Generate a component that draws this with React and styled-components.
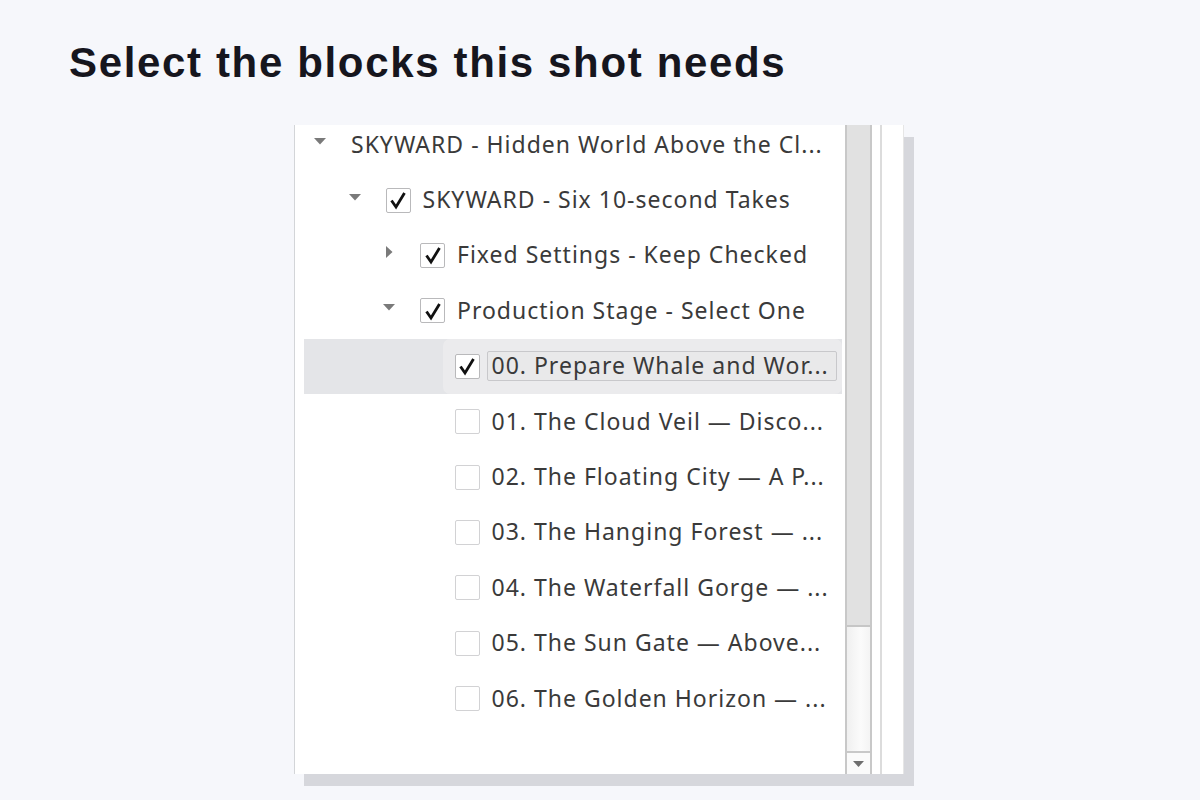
import React from 'react';
import styled, { createGlobalStyle } from 'styled-components';

const GlobalStyle = createGlobalStyle`
    html, body {
        margin: 0;
        padding: 0;
        background: #f6f7fb;
    }
    body {
        font-family: "Liberation Sans", Arial, sans-serif;
    }
`;

const Page = styled.div`
    width: 1200px;
    height: 800px;
    overflow: hidden;
    display: flex;
    flex-direction: column;
    box-sizing: border-box;
    padding: 40px 0 0 69px;
`;

const Heading = styled.h1`
    margin: 0;
    font-family: "Liberation Sans", Arial, sans-serif;
    font-size: 42px;
    line-height: 46px;
    font-weight: 700;
    letter-spacing: 1.65px;
    color: #16161e;
`;

const Shot = styled.div`
    align-self: flex-start;
    margin: 39px 0 0 225px;
    width: 610px;
    height: 649px;
    display: flex;
    background: #ffffff;
    border-left: 1px solid #d3d5d8;
    box-sizing: border-box;
    box-shadow: 10px 12px 0 #d6d7dc;
    overflow: hidden;
`;

const TreeArea = styled.div`
    flex: 1;
    padding: 0 3px 0 9px;
`;

const TreeList = styled.ul`
    list-style: none;
    margin: -8px 0 0;
    padding: 0;
    font-family: "Noto Sans", "Open Sans", sans-serif;
    font-size: 23px;
    letter-spacing: 1px;
    color: #3a3a3a;
`;

const Row = styled.li`
    display: flex;
    align-items: center;
    height: 55.4px;
    background: ${(p) => (p.selected ? '#e4e5e8' : 'transparent')};
`;

const Indent = styled.div`
    flex: none;
    width: ${(p) => p.level * 34.5}px;
`;

const Toggle = styled.div`
    flex: none;
    width: 32px;
    height: 100%;
    display: flex;
    align-items: center;
    justify-content: center;
    padding-bottom: 6px;
    box-sizing: border-box;
`;

const Item = styled.div`
    flex: 1;
    height: 100%;
    display: flex;
    align-items: center;
    margin-left: 3px;
    padding: 0 5px 0 12px;
    border-radius: 7px;
    background: ${(p) => (p.selected ? '#ebebed' : '#ffffff')};
`;

const Box = styled.span`
    flex: none;
    width: 25px;
    height: 25px;
    box-sizing: border-box;
    border: 1px solid ${(p) => (p.checked ? '#b9b9bb' : '#d2d2d4')};
    border-radius: 2px;
    background: #ffffff;
    display: flex;
    align-items: center;
    justify-content: center;
    margin-right: 7px;
`;

const Label = styled.span`
    flex: 1;
    white-space: nowrap;
    padding: 0 4px 1px;
    line-height: 27px;
    border: 1px solid ${(p) => (p.selected ? '#c8c8cb' : 'transparent')};
    border-radius: 2px;
    background: ${(p) => (p.selected ? '#e9e9ea' : 'transparent')};
    margin-left: ${(p) => (p.bare ? '-5px' : '0')};
`;

const Scrollbar = styled.div`
    flex: none;
    width: 27px;
    display: flex;
    flex-direction: column;
    border-left: 2px solid #c8c8c8;
    border-right: 2px solid #c8c8c8;
    box-sizing: border-box;
`;

const Thumb = styled.div`
    flex: none;
    height: 502px;
    background: #e1e1e1;
    border-bottom: 2px solid #c6c6c6;
    box-sizing: border-box;
`;

const Track = styled.div`
    flex: 1;
    background: linear-gradient(90deg, #f0f0f0, #fbfbfb 60%, #f4f4f4);
`;

const ArrowButton = styled.div`
    flex: none;
    height: 21px;
    border-top: 2px solid #c8c8c8;
    background: #fafafa;
    display: flex;
    align-items: center;
    justify-content: center;
`;

const Gutter = styled.div`
    flex: none;
    width: 8px;
`;

const Divider = styled.div`
    flex: none;
    width: 21px;
    border-left: 2px solid #dcdcdc;
    border-right: 1px solid #e6e6e6;
`;

const Caret = ({ open }) =>
    open ? (
        <svg width="12" height="7" viewBox="0 0 12 7">
            <path d="M0 0 H12 L6 6.5 Z" fill="#7a7a7a" />
        </svg>
    ) : (
        <svg width="7" height="12" viewBox="0 0 7 12">
            <path d="M0 0 V12 L6.5 6 Z" fill="#7a7a7a" />
        </svg>
    );

const Check = () => (
    <svg width="20" height="20" viewBox="0 0 20 20">
        <path
            d="M3.5 10.5 L8 17 L16.5 3"
            fill="none"
            stroke="#111"
            strokeWidth="2.8"
            strokeLinejoin="miter"
        />
    </svg>
);

const rows = [
    { level: 0, caret: 'open', box: null, text: 'SKYWARD - Hidden World Above the Cl...' },
    { level: 1, caret: 'open', box: true, text: 'SKYWARD - Six 10-second Takes' },
    { level: 2, caret: 'closed', box: true, text: 'Fixed Settings - Keep Checked' },
    { level: 2, caret: 'open', box: true, text: 'Production Stage - Select One' },
    { level: 3, box: true, selected: true, text: '00. Prepare Whale and Wor...' },
    { level: 3, box: false, text: '01. The Cloud Veil — Disco...' },
    { level: 3, box: false, text: '02. The Floating City — A P...' },
    { level: 3, box: false, text: '03. The Hanging Forest — ...' },
    { level: 3, box: false, text: '04. The Waterfall Gorge — ...' },
    { level: 3, box: false, text: '05. The Sun Gate — Above...' },
    { level: 3, box: false, text: '06. The Golden Horizon — ...' }
];

const TreeRow = ({ row }) => (
    <Row selected={row.selected}>
        <Indent level={row.level} />
        <Toggle>{row.caret && <Caret open={row.caret === 'open'} />}</Toggle>
        <Item selected={row.selected}>
            {row.box !== null && (
                <Box checked={row.box}>{row.box && <Check />}</Box>
            )}
            <Label selected={row.selected} bare={row.box === null}>
                {row.text}
            </Label>
        </Item>
    </Row>
);

const App = () => (
    <>
        <GlobalStyle />
        <Page>
            <Heading>Select the blocks this shot needs</Heading>
            <Shot>
                <TreeArea>
                    <TreeList>
                        {rows.map((row, i) => (
                            <TreeRow key={i} row={row} />
                        ))}
                    </TreeList>
                </TreeArea>
                <Scrollbar>
                    <Thumb />
                    <Track />
                    <ArrowButton>
                        <svg width="11" height="6" viewBox="0 0 11 6">
                            <path d="M0 0 H11 L5.5 6 Z" fill="#6e6e6e" />
                        </svg>
                    </ArrowButton>
                </Scrollbar>
                <Gutter />
                <Divider />
            </Shot>
        </Page>
    </>
);

export default App;
